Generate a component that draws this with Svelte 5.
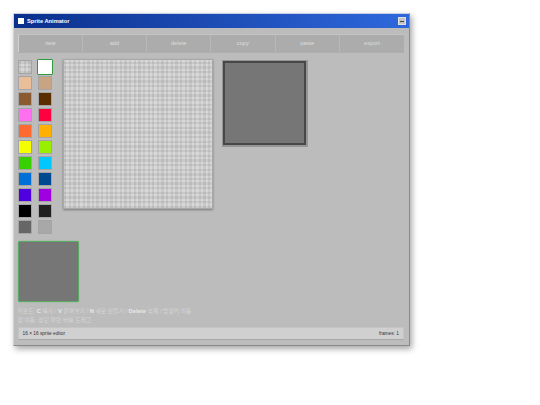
<script>
  const actions = ['new', 'add', 'delete', 'copy', 'paste', 'export'];
  const colors = ['check', '#ffffff', '#e8bf98', '#c8a482', '#8b5a30', '#5a2e00', '#ff70f0', '#ff0040', '#ff6a30', '#ffb000', '#f4ff00', '#98f000', '#38d000', '#00c8ff', '#0070d8', '#004890', '#5000e0', '#a000e0', '#000000', '#202020', '#666666', '#a8a8a8'];
</script>

<div class="page">
  <section class="window">
    <header class="title">
      <span class="app-icon"></span>
      <span class="name">Sprite Animator</span>
      <span class="min"><i></i></span>
    </header>
    <div class="body">
      <nav class="toolbar">
        {#each actions as a}
          <button>{a}</button>
        {/each}
      </nav>
      <div class="work">
        <div class="palette">
          {#each colors as c, i}
            <div class="cell">
              <span class="swatch" class:check={c === 'check'} class:active={i === 1} style={c === 'check' ? '' : `background:${c}`}></span>
            </div>
          {/each}
        </div>
        <div class="canvas"></div>
        <div class="preview"><div class="preview-in"></div></div>
      </div>
      <div class="frames"><div class="frame"></div></div>
      <p class="help">키보드: <b>C</b> 복사 / <b>V</b> 붙여넣기 / <b>N</b> 새로 만들기 / <b>Delete</b> 삭제 / 방향키 이동<br />창 이동: 상단 파란 바를 드래그</p>
      <footer class="status"><span>16 × 16 sprite editor</span><span>frames: 1</span></footer>
    </div>
  </section>
</div>

<style>
  :global(body) { margin: 0; background: #fff; }
  .page { padding: 13px 0 0 13px; width: 527px; height: 392px; box-sizing: border-box; font-family: "Liberation Sans", "Noto Sans CJK KR", sans-serif; }
  .window { width: 397px; height: 333px; box-sizing: border-box; background: #bcbcbc; border: 1px solid #8a8a8a; border-top-color: #c8d0e8; border-left-color: #d4d4d4; box-shadow: 2px 3px 6px rgba(0,0,0,.35); display: flex; flex-direction: column; }
  .title { height: 14px; flex: none; display: flex; align-items: center; padding: 0 3px 0 3.5px; background: linear-gradient(90deg, #0a2f8c, #2e68dc); color: #fff; font-size: 5.7px; font-weight: 700; }
  .app-icon { width: 6px; height: 6px; background: #fff; margin-right: 3.5px; }
  .name { flex: 1; }
  .min { width: 8px; height: 8px; background: #c4c4c4; border: 0.5px solid #e0e0e0; box-sizing: border-box; display: flex; align-items: flex-end; justify-content: center; padding-bottom: 2px; }
  .min i { width: 4.5px; height: 1px; background: #444; display: block; }
  .body { flex: 1; display: flex; flex-direction: column; padding: 5.5px 5px 5px 3.5px; min-height: 0; }
  .toolbar { height: 18px; flex: none; display: grid; grid-template-columns: repeat(6, 1fr); background: #acacac; border-top: 1px solid #c4c4c4; border-left: 1px solid #cfcfcf; box-sizing: border-box; box-shadow: 0 0.5px 0 #a0a0a0; }
  button { all: unset; text-align: center; font-size: 5.7px; color: #dedede; border-right: 0.5px solid #b8b8b8; }
  button:last-child { border-right: 0; }
  .work { display: flex; align-items: flex-start; margin-top: 8px; height: 174px; flex: none; }
  .palette { width: 40px; display: grid; grid-template-columns: 20px 20px; grid-auto-rows: 16px; margin-right: 5.5px; }
  .cell { display: flex; align-items: flex-start; }
  .swatch { width: 14px; height: 14px; box-sizing: border-box; border: 1px solid #a4a4a4; display: block; }
  .swatch.check { background:
    repeating-linear-gradient(90deg, rgba(0,0,0,.07) 0 2.32px, transparent 2.32px 4.64px),
    repeating-linear-gradient(0deg, rgba(0,0,0,.07) 0 2.32px, transparent 2.32px 4.64px),
    #d8d8d8; }
  .swatch.active { width: 16px; height: 16px; margin-top: -1px; margin-left: -1px; border: 1.5px solid #2f9a3c; border-radius: 1px; }
  .canvas { width: 149.5px; height: 149.5px; margin-top: -0.5px; box-sizing: border-box; background:
    repeating-linear-gradient(90deg, rgba(0,0,0,.07) 0 2.32px, transparent 2.32px 4.64px),
    repeating-linear-gradient(0deg, rgba(0,0,0,.07) 0 2.32px, transparent 2.32px 4.64px),
    #d8d8d8; box-shadow: 0 1px 2px rgba(0,0,0,.35); border: 1px solid #a8a8a8; }
  .preview { width: 86px; height: 87px; margin-left: 9px; box-sizing: border-box; padding: 1.5px; background: #959595; }
  .preview-in { height: 100%; box-sizing: border-box; background: #767676; border: 2px solid #474747; }
  .frames { margin-top: 7px; height: 61px; flex: none; }
  .frame { width: 61px; height: 61px; box-sizing: border-box; background: #767676; border: 1px solid #5aa864; box-shadow: 0 0 1.5px #62c46c; border-radius: 1.5px; }
  .help { margin: 5.5px 0 0; font-size: 5.8px; line-height: 9px; color: #d6d6d6; width: 190px; height: 18px; flex: none; white-space: nowrap; }
  .help b { color: #e8e8e8; }
  .status { margin-top: 2px; height: 12.5px; flex: none; background: #d0d0d0; box-sizing: border-box; border: 0.5px solid #c4c4c4; border-bottom-color: #a8a8a8; display: flex; justify-content: space-between; align-items: center; padding: 0 4px; font-size: 4.8px; color: #333; }
</style>
